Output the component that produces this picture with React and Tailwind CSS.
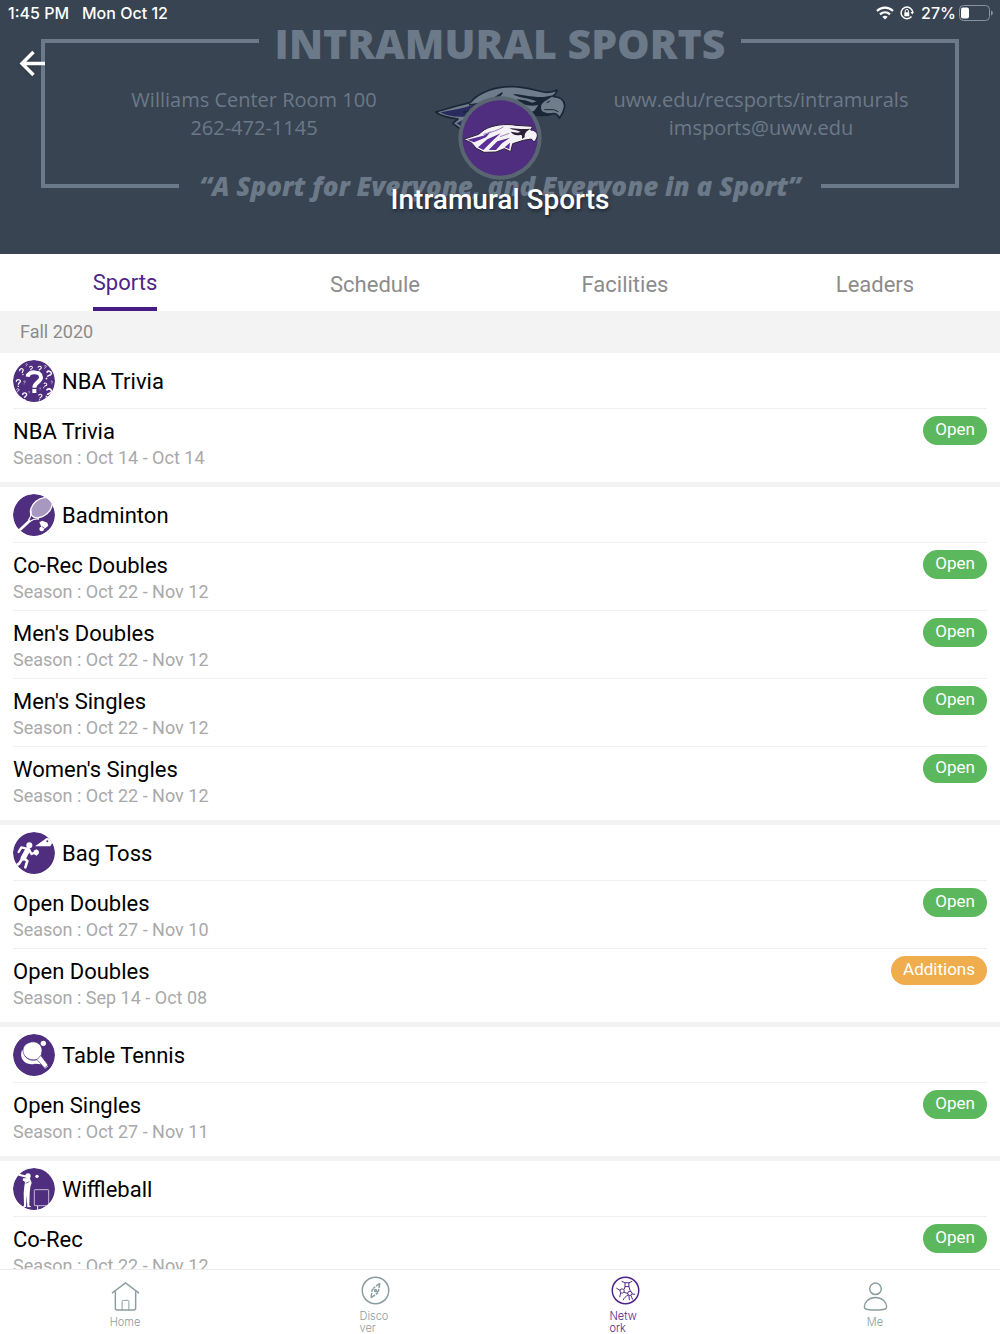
import { useState } from "react";

const tabs = ["Sports", "Schedule", "Facilities", "Leaders"];

const sports = [
  {
    name: "NBA Trivia",
    icon: "trivia",
    leagues: [{ name: "NBA Trivia", season: "Oct 14 - Oct 14", status: "Open" }],
  },
  {
    name: "Badminton",
    icon: "badminton",
    leagues: [
      { name: "Co-Rec Doubles", season: "Oct 22 - Nov 12", status: "Open" },
      { name: "Men's Doubles", season: "Oct 22 - Nov 12", status: "Open" },
      { name: "Men's Singles", season: "Oct 22 - Nov 12", status: "Open" },
      { name: "Women's Singles", season: "Oct 22 - Nov 12", status: "Open" },
    ],
  },
  {
    name: "Bag Toss",
    icon: "bagtoss",
    leagues: [
      { name: "Open Doubles", season: "Oct 27 - Nov 10", status: "Open" },
      { name: "Open Doubles", season: "Sep 14 - Oct 08", status: "Additions" },
    ],
  },
  {
    name: "Table Tennis",
    icon: "tabletennis",
    leagues: [{ name: "Open Singles", season: "Oct 27 - Nov 11", status: "Open" }],
  },
  {
    name: "Wiffleball",
    icon: "wiffleball",
    leagues: [{ name: "Co-Rec", season: "Oct 22 - Nov 12", status: "Open" }],
  },
];

// [x, y, size, rotation] of the small question marks
const marks = [
  [27, 36, 22, -20], [53, 27, 18, 10], [79, 28, 20, 10], [105, 46, 28, 25],
  [96, 22, 12, 20], [40, 16, 10, 10], [16, 70, 24, 0], [34, 68, 11, 10],
  [13, 93, 15, 20], [35, 110, 24, 0], [48, 98, 8, 0], [81, 112, 20, 10],
  [105, 100, 30, 25], [95, 77, 18, 25], [116, 68, 10, 0], [81, 87, 8, 0],
];

const QuestionMark = ({ x, y, size, turn }) => (
  <g
    transform={`translate(${x} ${y}) rotate(${turn}) scale(${size / 24})`}
    fill="none"
    stroke="#fff"
    strokeWidth="4"
  >
    <path d="M-6 -5c0 -8 12 -8 12 -1c0 5 -6 4 -6 10" />
    <path d="M0 7v4" />
  </g>
);

const SportIcon = ({ name }) => (
  <svg viewBox="0 0 126 126" className="size-[42px] shrink-0 rounded-full" aria-hidden="true">
    <circle cx="63" cy="63" r="63" fill="#4f2d7f" />
    {name === "trivia" && (
      <>
        {marks.map(([x, y, size, turn]) => (
          <QuestionMark key={`${x}-${y}`} x={x} y={y} size={size} turn={turn} />
        ))}
        <g fill="none" stroke="#fff" strokeWidth="12">
          <path d="M44 50c2 -18 40 -17 40 2c0 15 -20 14 -20 31" />
          <path d="M64 87v12" />
        </g>
      </>
    )}
    {name === "badminton" && (
      <>
        <ellipse cx="85" cy="41" rx="37" ry="25" transform="rotate(-40 85 41)" fill="#a898c0" stroke="#fff" strokeWidth="4" />
        <path d="M50 80L18 110" stroke="#fff" strokeWidth="8" />
        <path d="M54 50c1 12 0 19 -7 28l5 4c8 -7 15 -8 26 -7" fill="none" stroke="#fff" strokeWidth="4" />
        <path d="M79 84l9 -4l7 3l8 3l3 9l-11 9l-9 -2z" fill="#fff" />
        <circle cx="86" cy="105" r="7" fill="#fff" />
        <path d="M86 97l8 5" stroke="#4f2d7f" strokeWidth="2" />
      </>
    )}
    {name === "bagtoss" && (
      <>
        <circle cx="49" cy="40" r="9" fill="#fff" />
        <g fill="none" stroke="#fff" strokeLinecap="round" strokeLinejoin="round">
          <path d="M44 54L31 78" strokeWidth="16" />
          <path d="M41 50L25 46L17 60" strokeWidth="7" />
          <path d="M48 54L56 66L70 60" strokeWidth="7" />
          <path d="M29 78L19 94L5 104" strokeWidth="8" />
          <path d="M33 79L43 87L37 106" strokeWidth="8" />
        </g>
        <path d="M62 56l8 -4l7 4l1 8l-7 7l-8 -4z" fill="#fff" />
        <path d="M66 43L101 18L124 22L112 43z" fill="#fff" />
        <circle cx="103" cy="28" r="3" fill="#4f2d7f" />
      </>
    )}
    {name === "tabletennis" && (
      <>
        <path d="M27 48c-10 25 9 49 39 41l18 2l12 13l9 -7l-20 -23z" fill="#fff" />
        <path
          d="M48 26c21 -9 45 8 38 31l-1 10l20 26l-10 9l-23 -25c-21 4 -42 -7 -42 -28c0 -11 7 -19 18 -23z"
          fill="#fff"
          stroke="#4f2d7f"
          strokeWidth="2"
        />
        <path d="M35 65c8 13 24 17 38 11M87 60l-14 16" fill="none" stroke="#4f2d7f" strokeWidth="2" />
        <circle cx="91" cy="28" r="8" fill="#fff" />
      </>
    )}
    {name === "wiffleball" && (
      <>
        <path d="M18 20L44 27" stroke="#fff" strokeWidth="6" strokeLinecap="round" />
        <circle cx="45" cy="24" r="8" fill="#fff" />
        <path d="M30 31L38 31L50 29L56 44L52 57L50 76L49 112L55 117L43 118L41 82L39 117L29 118L33 112L32 76L34 55L36 42L29 37z" fill="#fff" />
        <path d="M38 46L49 41" stroke="#4f2d7f" strokeWidth="2" />
        <circle cx="72" cy="25" r="5" fill="#fff" />
        <rect x="64" y="65" width="43" height="48" rx="2" fill="none" stroke="#fff" strokeWidth="2" />
        <path d="M74 114v12M98 114v12" stroke="#fff" strokeWidth="3" />
      </>
    )}
  </svg>
);

const Hawk = ({ light, dark, purple }) => (
  <>
    <path
      d="M107 126L170 108L210 98C238 64 292 48 340 50C374 50 405 61 430 66C449 69 463 64 471 60C470 69 464 75 459 79C481 80 493 92 494 107C492 124 485 136 478 144C474 135 468 130 458 131C433 142 411 134 392 135L330 158L310 190L294 170L245 176L205 194L158 160L174 147C145 144 122 138 107 126Z"
      fill={light}
      stroke={dark}
      strokeWidth="5"
      strokeLinejoin="round"
    />
    <path d="M121 127L178 116L254 96L225 118L192 140C163 142 139 137 121 127Z" fill={purple} />
    <path d="M170 160L210 139L270 108L236 144L205 184Z" fill={purple} />
    <path d="M207 105C240 101 281 88 307 68C288 97 253 112 190 127M220 154C262 130 296 117 325 96M250 161C284 146 310 129 332 122" fill="none" stroke={dark} strokeWidth="4" />
    <path d="M338 73C367 72 394 83 432 81L463 75C447 88 429 94 424 105C420 124 428 130 460 130C430 142 402 137 384 130L403 122L415 105C389 112 362 103 350 88L375 91L397 98L410 94C385 84 358 84 338 73Z" fill={dark} />
    <path d="M440 98l10 -5M433 119l28 0l14 6" fill="none" stroke={dark} strokeWidth="3" />
  </>
);

// smaller bird inside the round badge, feathers drawn as purple streaks
const BadgeHawk = () => (
  <>
    <path
      d="M191 208L236 193L252 180C276 165 318 160 348 166L398 169L392 180C406 181 413 189 412 198C410 207 406 211 402 216L394 207L370 211L338 221L332 245L313 236L288 246L252 247L229 235L214 218Z"
      fill="#f4f2f6"
      stroke="#2c2038"
      strokeWidth="3"
      strokeLinejoin="round"
    />
    <path d="M202 209L250 197L274 183L258 202L222 217ZM234 232L262 208L302 190L276 214L250 240ZM266 240L292 214L330 203L306 220L288 240ZM314 232L330 218L328 238Z" fill="#5b2f98" />
    <path d="M250 193C276 186 294 181 310 171M300 200L328 190" fill="none" stroke="#9a86b8" strokeWidth="3" />
    <path d="M328 175C346 173 362 180 392 176C380 183 373 188 374 202L366 207C366 198 368 194 360 195C346 198 336 192 332 185L352 188L362 186C350 180 340 181 328 175Z" fill="#2c2038" />
  </>
);

const TeamLogo = () => (
  <svg viewBox="90 30 420 309" className="w-[140px]" role="img" aria-label="Warhawks logo">
    <Hawk light="#6f7c8a" dark="#182635" purple="#292b5e" />
    <circle cx="300" cy="204" r="125" fill="#596571" />
    <circle cx="300" cy="204" r="113" fill="#4f2d7f" />
    <BadgeHawk />
  </svg>
);

const StatusBar = () => (
  <div className="absolute inset-x-0 top-0 flex h-[26px] items-center justify-between pl-2 pr-[7px] font-['Inter',sans-serif] text-base font-medium text-white">
    <div className="flex gap-[13px]">
      <span>1:45 PM</span>
      <span>Mon Oct 12</span>
    </div>
    <div className="flex items-center">
      <svg viewBox="0 0 18 14" className="h-[14px] w-[18px]" fill="none" stroke="#fff" strokeWidth="2.3" aria-hidden="true">
        <path d="M1 5C5.500 .6 12.500 .6 17 5M4 8.300C7 5.600 11 5.600 14 8.300" />
        <path d="M9 13.500L6.300 10.700C7.900 9.300 10.100 9.300 11.700 10.700Z" fill="#fff" stroke="none" />
      </svg>
      <svg viewBox="0 0 14 14" className="ml-[6px] size-[14px]" fill="none" stroke="#fff" strokeWidth="1.500" aria-hidden="true">
        <path d="M11.500 10.500A5.800 5.800 0 1 1 12.700 6" />
        <path d="M10.500 6h3.500l-1.700 2.500z" fill="#fff" stroke="none" />
        <path d="M5.200 6.500v-1.500a1.600 1.600 0 0 1 3.200 0v1.500" strokeWidth="1" />
        <rect x="4.300" y="6.300" width="5" height="3.900" rx=".5" fill="#fff" stroke="none" />
      </svg>
      <span className="ml-[7px] mr-[3px]">27%</span>
      <svg viewBox="0 0 34 16" className="h-4 w-[34px]" aria-hidden="true">
        <rect x=".5" y=".5" width="30" height="15" rx="4" fill="none" stroke="#8a939d" />
        <rect x="2" y="2.500" width="8" height="11" rx="2" fill="#fff" />
        <path d="M32 5.500c2.500 1 2.500 4 0 5z" fill="#8a939d" />
      </svg>
    </div>
  </div>
);

const Banner = () => (
  <header className="relative h-[254px] shrink-0 bg-[#384452] px-[41px] pt-[39px] font-['Open_Sans',sans-serif] text-[#6c7988]">
    <div className="flex h-[149px] flex-col items-center border-4 border-[#6c7988]">
      <p className="-mt-[25px] bg-[#384452] px-4 text-[41px] leading-[50px] font-extrabold whitespace-nowrap">
        INTRAMURAL SPORTS
      </p>
      <div className="mt-[18px] grid w-full grid-cols-2 gap-[207px] pr-[44px] pl-[59px] text-center text-xl leading-7 whitespace-nowrap">
        <p>
          Williams Center Room 100
          <br />
          262-472-1145
        </p>
        <p>
          uww.edu/recsports/intramurals
          <br />
          imsports@uww.edu
        </p>
      </div>
      <p className="mt-auto -mb-[18px] bg-[#384452] px-5 text-[26px] leading-8 font-extrabold whitespace-nowrap italic">
        “A Sport for Everyone, and Everyone in a Sport”
      </p>
    </div>
    <div className="absolute inset-x-0 top-[80px] flex justify-center">
      <TeamLogo />
    </div>
    <h1 className="absolute inset-x-0 top-[184px] text-center font-['Roboto',sans-serif] text-[28px] leading-8 font-medium text-white [text-shadow:1px_2px_3px_#1f2937]">
      Intramural Sports
    </h1>
    <StatusBar />
    <button type="button" aria-label="Back" className="absolute top-[50px] left-[19px] drop-shadow">
      <svg viewBox="0 0 27 27" className="size-[27px]" fill="none" stroke="#fff" strokeWidth="3.500" aria-hidden="true">
        <path d="M26 13.500H3M14.500 2L3 13.500L14.500 25" />
      </svg>
    </button>
  </header>
);

const Tabs = ({ active, setActive }) => (
  <nav className="grid h-[57px] shrink-0 grid-cols-4 bg-white text-[22px]">
    {tabs.map((tab) => (
      <div key={tab} className="flex justify-center">
        <button
          type="button"
          onClick={() => setActive(tab)}
          className={
            tab === active
              ? "border-b-4 border-[#461c82] pt-[3px] text-[#4f2387]"
              : "pt-[3px] text-[#8c8c8c]"
          }
        >
          {tab}
        </button>
      </div>
    ))}
  </nav>
);

const League = ({ name, season, status }) => (
  <li className="flex h-[68px] items-start justify-between border-t border-[#f0f0f0] pt-[7px]">
    <div>
      <h3 className="text-[22px] leading-8 text-black">{name}</h3>
      <p className="text-lg leading-5 text-[#a9a9a9]">Season : {season}</p>
    </div>
    <span
      className={`h-[29px] rounded-full px-3 text-[17px] leading-[27px] text-white ${
        status === "Open" ? "bg-[#5cb85c]" : "bg-[#f0ad4e]"
      }`}
    >
      {status}
    </span>
  </li>
);

const SportGroup = ({ sport }) => (
  <section className="border-b-[5px] border-[#f3f3f3] bg-white px-[13px] pb-[6px]">
    <div className="flex h-[55px] items-center gap-[7px]">
      <SportIcon name={sport.icon} />
      <h2 className="pt-[2px] text-[22px] text-black">{sport.name}</h2>
    </div>
    <ul>
      {sport.leagues.map((league, i) => (
        <League key={i} {...league} />
      ))}
    </ul>
  </section>
);

const navItems = [
  {
    label: "Home",
    icon: (
      <>
        <path d="M1 11.500L15 1L29 11.500" />
        <path d="M4.500 9.500V27a2 2 0 0 0 2 2h17a2 2 0 0 0 2 -2V9.500" />
        <path d="M11.500 29V20a1 1 0 0 1 1 -1h5a1 1 0 0 1 1 1v9" strokeWidth="1" />
      </>
    ),
  },
  {
    label: "Discover",
    icon: (
      <>
        <circle cx="15" cy="15" r="13.700" />
        <path d="M19.500 7.500L13 12.500M19.500 7.500L18 15.500L16 17M10.500 22.500L11.500 14.500L13 13M10.500 22.500L17.500 17.500" strokeDasharray="5 1" />
        <circle cx="15" cy="15" r="1" />
      </>
    ),
  },
  {
    label: "Network",
    icon: (
      <>
        <circle cx="15" cy="15" r="13.700" />
        <g strokeWidth="1">
          <rect x="14.500" y="7" width="4" height="4" />
          <path d="M11 5.500L14.500 7M22 5.500L18.500 7M14.500 11L13.500 14M18.500 11L20 15.500" />
          <circle cx="11.500" cy="15.500" r="2.200" />
          <circle cx="19.500" cy="18" r="2.200" />
          <path d="M5.500 12.500L9.500 15M10 17.500L9 22M13.500 17L17.500 18M25 19L21.700 18.500M18 19.500C15 21 13.500 23 12.500 25M20.500 20L22.500 24.500M18.500 20L19 25" />
        </g>
      </>
    ),
  },
  {
    label: "Me",
    icon: (
      <>
        <circle cx="15" cy="7" r="6" />
        <path d="M15 16C8 16 3.500 21 3.500 25.500C3.500 28 5 29 15 29S26.500 28 26.500 25.500C26.500 21 22 16 15 16Z" />
      </>
    ),
  },
];

const BottomNav = () => (
  <nav className="grid h-[65px] shrink-0 grid-cols-4 border-t border-[#ececec] bg-white pt-[6px] font-['Inter',sans-serif] text-[11px] leading-3 font-light">
    {navItems.map(({ label, icon }) => (
      <a
        key={label}
        href={`#${label.toLowerCase()}`}
        className={`flex flex-col items-center justify-center gap-[5px] ${
          label === "Network" ? "text-[#4f2387]" : "text-[#8a9d9e]"
        }`}
      >
        <svg viewBox="0 0 30 30" className="size-[29px] shrink-0" fill="none" stroke="currentColor" strokeWidth="1.500" aria-hidden="true">
          {icon}
        </svg>
        <span className="max-w-[31px] break-all">{label}</span>
      </a>
    ))}
  </nav>
);

const App = () => {
  const [active, setActive] = useState("Sports");

  return (
    <div className="flex h-screen flex-col bg-white font-['Roboto',sans-serif]">
      <Banner />
      <Tabs active={active} setActive={setActive} />
      <main className="min-h-0 flex-1 overflow-y-auto [scrollbar-width:none]">
        <p className="h-[42px] bg-[#f3f3f3] px-5 text-lg leading-[42px] text-[#8c8c8c]">Fall 2020</p>
        {sports.map((sport) => (
          <SportGroup key={sport.name} sport={sport} />
        ))}
      </main>
      <BottomNav />
    </div>
  );
};

export default App;
